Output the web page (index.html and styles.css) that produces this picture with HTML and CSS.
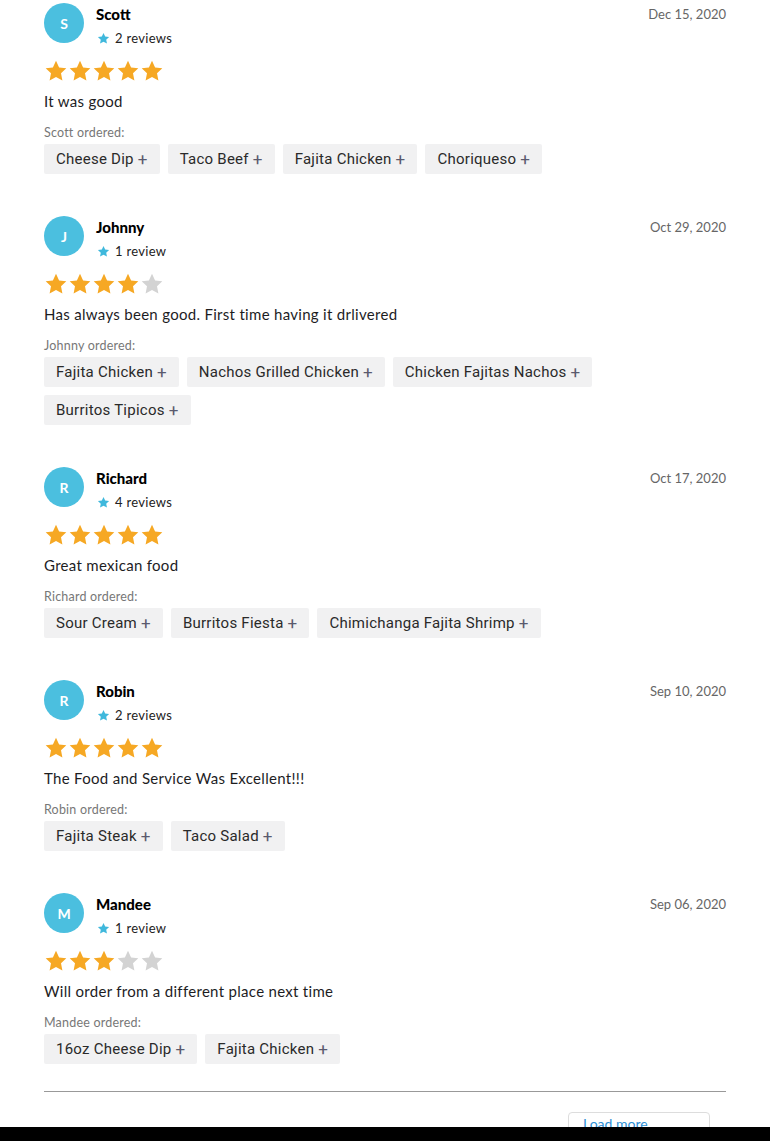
FILE: index.html
```html
<!DOCTYPE html>
<html lang="en">
<head>
<meta charset="utf-8">
<title>Reviews</title>
<link rel="stylesheet" href="styles.css">
</head>
<body>
<svg width="0" height="0" class="defs">
  <defs>
    <symbol id="star" viewBox="0 0 24 24"><path d="M12 1.8l3.1 6.6 7.2.9-5.3 5 1.4 7.1L12 17.9l-6.4 3.5 1.4-7.1-5.3-5 7.2-.9z"/></symbol>
  </defs>
</svg>
<main class="reviews">

  <article class="review">
    <div class="head">
      <div class="avatar">S</div>
      <div class="meta">
        <div class="name">Scott</div>
        <div class="count"><svg class="mini"><use href="#star"/></svg>2 reviews</div>
      </div>
      <div class="date">Dec 15, 2020</div>
    </div>
    <div class="stars"><svg class="on"><use href="#star"/></svg><svg class="on"><use href="#star"/></svg><svg class="on"><use href="#star"/></svg><svg class="on"><use href="#star"/></svg><svg class="on"><use href="#star"/></svg></div>
    <p class="text">It was good</p>
    <div class="ordered">Scott ordered:</div>
    <div class="chips">
      <span class="chip">Cheese Dip <b>+</b></span>
      <span class="chip">Taco Beef <b>+</b></span>
      <span class="chip">Fajita Chicken <b>+</b></span>
      <span class="chip">Choriqueso <b>+</b></span>
    </div>
  </article>

  <article class="review">
    <div class="head">
      <div class="avatar">J</div>
      <div class="meta">
        <div class="name">Johnny</div>
        <div class="count"><svg class="mini"><use href="#star"/></svg>1 review</div>
      </div>
      <div class="date">Oct 29, 2020</div>
    </div>
    <div class="stars"><svg class="on"><use href="#star"/></svg><svg class="on"><use href="#star"/></svg><svg class="on"><use href="#star"/></svg><svg class="on"><use href="#star"/></svg><svg class="off"><use href="#star"/></svg></div>
    <p class="text">Has always been good. First time having it drlivered</p>
    <div class="ordered">Johnny ordered:</div>
    <div class="chips">
      <span class="chip">Fajita Chicken <b>+</b></span>
      <span class="chip">Nachos Grilled Chicken <b>+</b></span>
      <span class="chip">Chicken Fajitas Nachos <b>+</b></span>
      <span class="chip">Burritos Tipicos <b>+</b></span>
    </div>
  </article>

  <article class="review">
    <div class="head">
      <div class="avatar">R</div>
      <div class="meta">
        <div class="name">Richard</div>
        <div class="count"><svg class="mini"><use href="#star"/></svg>4 reviews</div>
      </div>
      <div class="date">Oct 17, 2020</div>
    </div>
    <div class="stars"><svg class="on"><use href="#star"/></svg><svg class="on"><use href="#star"/></svg><svg class="on"><use href="#star"/></svg><svg class="on"><use href="#star"/></svg><svg class="on"><use href="#star"/></svg></div>
    <p class="text">Great mexican food</p>
    <div class="ordered">Richard ordered:</div>
    <div class="chips">
      <span class="chip">Sour Cream <b>+</b></span>
      <span class="chip">Burritos Fiesta <b>+</b></span>
      <span class="chip">Chimichanga Fajita Shrimp <b>+</b></span>
    </div>
  </article>

  <article class="review">
    <div class="head">
      <div class="avatar">R</div>
      <div class="meta">
        <div class="name">Robin</div>
        <div class="count"><svg class="mini"><use href="#star"/></svg>2 reviews</div>
      </div>
      <div class="date">Sep 10, 2020</div>
    </div>
    <div class="stars"><svg class="on"><use href="#star"/></svg><svg class="on"><use href="#star"/></svg><svg class="on"><use href="#star"/></svg><svg class="on"><use href="#star"/></svg><svg class="on"><use href="#star"/></svg></div>
    <p class="text">The Food and Service Was Excellent!!!</p>
    <div class="ordered">Robin ordered:</div>
    <div class="chips">
      <span class="chip">Fajita Steak <b>+</b></span>
      <span class="chip">Taco Salad <b>+</b></span>
    </div>
  </article>

  <article class="review">
    <div class="head">
      <div class="avatar">M</div>
      <div class="meta">
        <div class="name">Mandee</div>
        <div class="count"><svg class="mini"><use href="#star"/></svg>1 review</div>
      </div>
      <div class="date">Sep 06, 2020</div>
    </div>
    <div class="stars"><svg class="on"><use href="#star"/></svg><svg class="on"><use href="#star"/></svg><svg class="on"><use href="#star"/></svg><svg class="off"><use href="#star"/></svg><svg class="off"><use href="#star"/></svg></div>
    <p class="text">Will order from a different place next time</p>
    <div class="ordered">Mandee ordered:</div>
    <div class="chips">
      <span class="chip">16oz Cheese Dip <b>+</b></span>
      <span class="chip">Fajita Chicken <b>+</b></span>
    </div>
  </article>

  <hr class="divider">
  <div class="more-row">
    <button class="more">Load more reviews</button>
  </div>
</main>
<div class="bottom-bar"></div>
</body>
</html>
```
FILE: styles.css
```css
* { box-sizing: border-box; }
html, body { margin: 0; padding: 0; background: #fff; }
body { font-family: Lato, "Noto Sans", sans-serif; color: #1d1d1f; }
.defs { position: absolute; width: 0; height: 0; overflow: hidden; }

.reviews { padding: 3px 44px 0; display: flex; flex-direction: column; }
.review { display: flex; flex-direction: column; padding-bottom: 42px; }

.head { display: flex; align-items: flex-start; height: 40px; }
.avatar {
  width: 40px; height: 40px; border-radius: 50%;
  background: #4bbfdf; color: #fff;
  display: flex; align-items: center; justify-content: center;
  font-size: 14px; font-weight: 700; flex: none;
}
.meta { margin-left: 12px; display: flex; flex-direction: column; }
.name { font-size: 15px; font-weight: 900; line-height: 20px; margin-top: 1px; color: #000; }
.count { font-size: 13px; line-height: 18px; margin-top: 5px; display: flex; align-items: center; color: #222; letter-spacing: 0.3px; }
.mini { width: 13px; height: 13px; fill: #3fb8dc; margin: 0 5px 0 1px; }
.date { margin-left: auto; font-size: 13px; line-height: 18px; color: #666; margin-top: 2px; }

.stars { display: flex; margin-top: 16px; height: 24px; }
.stars svg { width: 24px; height: 24px; }
.stars .on { fill: #f6a824; }
.stars .off { fill: #d3d3d3; }

.text { margin: 7px 0 0; font-size: 15px; line-height: 22px; color: #1d1d1f; letter-spacing: 0.3px; }
.ordered { margin-top: 13px; font-size: 12.5px; line-height: 16px; color: #777; letter-spacing: 0.2px; }

.chips { display: flex; flex-wrap: wrap; gap: 8px 8px; margin-top: 3px; }
.chip {
  height: 30px; padding: 0 12px; background: #f1f1f2; border-radius: 2px;
  font-family: Roboto, "Liberation Sans", sans-serif; font-size: 15px; color: #2a2a2a;
  letter-spacing: 0.25px;
  display: inline-flex; align-items: center; white-space: pre;
}
.chip b { font-weight: 400; color: #5a5a6e; font-size: 17px; }

.divider { border: 0; border-top: 1px solid #999; margin: -15px 0 0; width: 100%; }
.more-row { display: flex; justify-content: flex-end; padding: 20px 16px 40px 0; }
.more {
  width: 142px; height: 40px; background: #fff; border: 1px solid #ddd; border-radius: 4px;
  color: #2d8fd5; font-family: Lato, sans-serif; font-size: 14px; text-align: left; padding: 0 14px;
}

.bottom-bar { position: fixed; left: 0; right: 0; bottom: 0; height: 14px; background: #000; }
```
